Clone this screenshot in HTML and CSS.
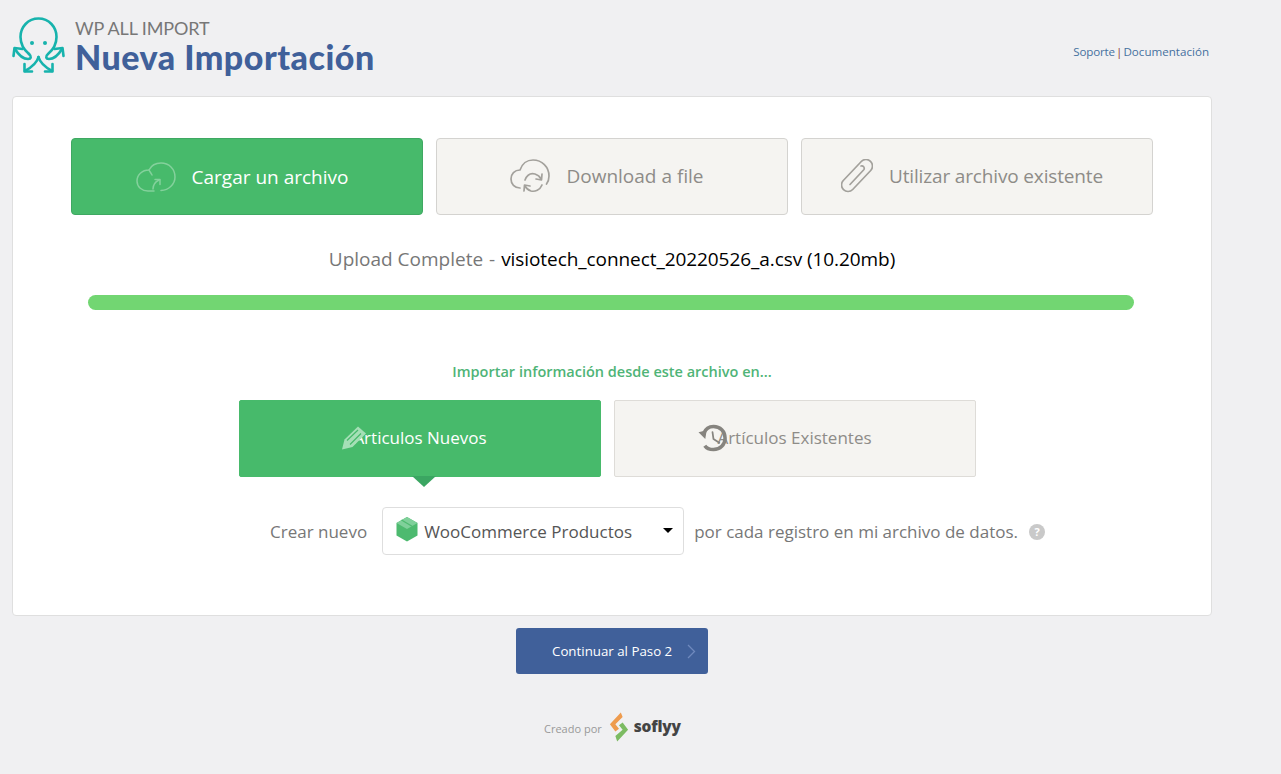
FILE: index.html
```html
<!DOCTYPE html>
<html lang="es">
<head>
<meta charset="utf-8">
<title>Nueva Importación</title>
<link rel="stylesheet" href="styles.css">
</head>
<body>
<div class="wrap">
  <header class="head">
    <svg class="logo" width="54" height="56" viewBox="0 0 54 56" fill="none" stroke="#17b3ad" stroke-width="2.6" stroke-linecap="round" stroke-linejoin="round">
      <path d="M17 37 C11 32 8.500 26 8.500 20 C8.500 10 16 1.500 26.500 1.500 C37 1.500 44.500 10 44.500 20 C44.500 26 42 32 36 37 C33 39.500 34 42 37 42 C42 42 47 37 50 32"/>
      <path d="M17 37 C20 39.500 19 42 16 42 C11 42 6 37 3 32"/>
      <path d="M1.500 39 L2.500 31 L10.500 32"/>
      <path d="M42.500 32 L50.500 31 L51.500 39"/>
      <path d="M26.500 40 C25 46 20 50 13 54"/>
      <path d="M26.500 40 C28 46 33 50 40 54"/>
      <path d="M12.500 47 L12.500 54.500 L20 54.500"/>
      <path d="M40.500 47 L40.500 54.500 L33 54.500"/>
      <circle cx="20" cy="26" r="2" fill="#17b3ad" stroke="none"/>
      <circle cx="33" cy="26" r="2" fill="#17b3ad" stroke="none"/>
    </svg>
    <div class="titles">
      <div class="brand">WP ALL IMPORT</div>
      <h1 class="title">Nueva Importación</h1>
    </div>
    <nav class="links"><a class="link link-short">Soporte</a><span class="sep">|</span><a class="link">Documentación</a></nav>
  </header>

  <main class="card">
    <div class="tabs">
      <div class="tab tab-on">
        <svg class="tab-icon" width="40" height="30" viewBox="0 0 40 30" fill="none" stroke="#84d19c" stroke-width="1.5" stroke-linecap="round" stroke-linejoin="round">
          <path d="M25 28.500 C33 28 39 22 39 15 C39 7 33 1 25 1 C19 1 15 4 13 8 C6 8 1 13 1 19 C1 25 6 29 12 29 L18 29"/>
          <path d="M13 8 C14 10 15 11 16 13"/>
          <path d="M17 27 C17 23 19 20 23 18"/>
          <path d="M19 17.500 L24 17.500 L24 22.500"/>
        </svg>
        <span>Cargar un archivo</span>
      </div>
      <div class="tab tab-off">
        <svg class="tab-icon" width="40" height="34" viewBox="0 0 40 34" fill="none" stroke="#a3a19c" stroke-width="1.7" stroke-linecap="round" stroke-linejoin="round">
          <path d="M10 29 C4.500 29 1 25 1 20 C1 15 4.500 11 10 11 C12 5 17 1 23 1 C32 1 39 8 39 17 C39 20 38 23 36.500 25"/>
          <path d="M15 21 C17 16 21 14 25 15 C28 16 30 18 31 20"/>
          <path d="M32 15 L31.500 21 L26 20"/>
          <path d="M32 26 C30 31 25 33 21 32 C18 31 16 29 15 27"/>
          <path d="M14 32 L14.500 26 L20 27"/>
        </svg>
        <span>Download a file</span>
      </div>
      <div class="tab tab-off">
        <svg class="tab-icon" width="32" height="34" viewBox="0 0 32 34" fill="none" stroke="#a3a19c" stroke-width="1.7" stroke-linecap="round" stroke-linejoin="round">
          <path d="M20.300 2.500 L2.300 21.500 A6.500 6.500 0 0 0 11.700 30.500 L29.700 11.500 A6.500 6.500 0 0 0 20.300 2.500 Z"/>
          <path d="M9 25.500 L23 10.500 A2.500 2.500 0 0 0 20 7"/>
        </svg>
        <span class="tight">Utilizar archivo existente</span>
      </div>
    </div>

    <p class="status"><span class="status-label">Upload Complete</span> <span class="status-dash">-</span> <span class="status-file">visiotech_connect_20220526_a.csv (10.20mb)</span></p>
    <div class="progress"></div>

    <h2 class="sub">Importar información desde este archivo en...</h2>
    <div class="choices">
      <div class="choice choice-on">
        <svg class="choice-icon" width="24" height="24" viewBox="1 2 24 23">
          <path d="M1 25 L3.500 15 L17 2 L25 9 L11.500 22.500 Z" fill="#a5dfb6"/>
          <path d="M6 16 L17 5.500 M9 20 L20 9" stroke="#47ba6b" stroke-width="1.200" fill="none"/>
        </svg>
        <span>Articulos Nuevos</span>
      </div>
      <div class="choice choice-off">
        <svg class="choice-icon" width="29" height="28" viewBox="0 0 30 28" fill="none" stroke="#86847f" stroke-width="3.600">
          <path d="M6 9 C8 4 12 2 16 2 C23 2 28 7 28 14 C28 21 23 26 16 26 C12 26 9 25 7 22"/>
          <path d="M0.500 8 L9 6 L7.500 15 Z" fill="#86847f" stroke="none"/>
          <path d="M15 8 L16 15 L22 19" stroke-width="1.800" stroke-linecap="round"/>
        </svg>
        <span>Artículos Existentes</span>
      </div>
    </div>

    <div class="create">
      <span>Crear nuevo</span>
      <div class="select">
        <svg class="box" width="22" height="25" viewBox="0 0 22 25">
          <path d="M11 0 L21.500 6 L21.500 18.500 L11 24.500 L0.500 18.500 L0.500 6 Z" fill="#4dba6f"/>
          <path d="M0.500 6 L11 12 L21.500 6 L11 0 Z" fill="#7fd09a"/>
          <path d="M5.500 3 L16 9.200" stroke="#4dba6f" stroke-width="1.200"/>
        </svg>
        <span class="select-text">WooCommerce Productos</span>
        <span class="caret"></span>
      </div>
      <span class="after">por cada registro en mi archivo de datos.</span>
      <span class="help">?</span>
    </div>
  </main>

  <div class="next-row">
    <div class="next">
      <span>Continuar al Paso 2</span>
      <svg width="9" height="15" viewBox="0 0 9 15" fill="none" stroke="#6f89bd" stroke-width="1.300"><path d="M1 1 L7.500 7.500 L1 14"/></svg>
    </div>
  </div>

  <footer class="foot">
    <span class="made">Creado por</span>
    <svg class="soflyy" width="20" height="32" viewBox="0 0 22 32">
      <path d="M13 0 L15 5 L7 13 L11 18 L7 21 L1 13 Z" fill="#ee9b4e"/>
      <path d="M9 32 L7 26 L15 19 L11 14 L15 11 L21 19 Z" fill="#7cbb62"/>
    </svg>
    <span class="soflyy-name">soflyy</span>
  </footer>
</div>
</body>
</html>
```
FILE: styles.css
```css
* { box-sizing: border-box; }
html, body { margin: 0; padding: 0; }
body {
  background: #f0f0f2;
  font-family: "Open Sans", "Noto Sans", sans-serif;
  color: #777;
  height: 774px;
  overflow: hidden;
}
.wrap { width: 1200px; margin-left: 12px; }

.head { height: 96px; display: flex; align-items: flex-start; }
.logo { margin-top: 17px; flex: none; }
.titles { margin-left: 9px; padding-top: 18px; }
.brand { font-family: Lato, sans-serif; font-size: 18px; line-height: 21px; color: #777; letter-spacing: -0.13px; }
.title { margin: 0; font-family: Lato, sans-serif; font-size: 34px; line-height: 36px; font-weight: 900; color: #40609a; letter-spacing: 0.5px; }
.links { display: flex; gap: 1.2px; margin-left: auto; margin-right: 3px; margin-top: 43px; font-size: 11.6px; line-height: 17px; }
.link { color: #46709f; }
.link-short { letter-spacing: -0.2px; }
.sep { color: #8c3a3a; }

.card {
  height: 520px;
  background: #fff;
  border: 1px solid #dfdfdf;
  border-radius: 4px;
  padding: 41px 58px 0;
}
.tabs { display: flex; gap: 13px; }
.tab {
  width: 352px;
  height: 77px;
  display: flex;
  align-items: center;
  justify-content: center;
  gap: 16px;
  padding-right: 10px;
  background: #f5f4f1;
  border: 1px solid #d4d3d0;
  border-radius: 4px;
  color: #8e8c88;
  font-size: 19px;
}
.tab-on { background: #47ba6b; border-color: #3fa862; color: #fff; }
.tab-off { padding-bottom: 2px; }
.tab-icon { flex: none; }
.tight { letter-spacing: -0.15px; }

.status { margin: 29px 0 0; height: 30px; text-align: center; font-size: 19px; line-height: 30px; color: #000; }
.status-label, .status-dash { color: #777; }
.status-dash { margin: 0 1px; }
.status-file { letter-spacing: -0.07px; }
.progress { width: 1046px; height: 15px; margin: 21px 0 0 17px; background: #72d672; border-radius: 8px; }

.sub { margin: 52px 0 0; text-align: center; font-size: 14.5px; line-height: 20px; font-weight: 600; color: #4fb477; }
.choices { display: flex; gap: 13px; margin: 18px 0 0 168px; }
.choice {
  width: 362px;
  height: 77px;
  display: flex;
  align-items: center;
  justify-content: center;
  padding-bottom: 2px;
  background: #f5f4f1;
  border: 1px solid #dedcd8;
  border-radius: 2px;
  color: #8e8c88;
  font-size: 17px;
  position: relative;
}
.choice-icon { flex: none; position: relative; }
.choice-on { background: #47ba6b; border-color: #47ba6b; color: #fff; padding-right: 11px; }
.choice-on .choice-icon { margin-right: -13px; }
.choice-off { padding-right: 20px; }
.choice-off .choice-icon { margin-right: -10px; }
.choice-on::after {
  content: "";
  position: absolute;
  left: 172px;
  top: 75px;
  border-left: 12px solid transparent;
  border-right: 12px solid transparent;
  border-top: 11px solid #3ba662;
}

.create { display: flex; align-items: center; margin-top: 30px; font-size: 17px; color: #777; padding-left: 199px; }
.select {
  width: 302px;
  height: 48px;
  margin: 0 10px 0 15px;
  display: flex;
  align-items: center;
  background: #fff;
  border: 1px solid #dedede;
  border-radius: 4px;
  padding-left: 13px;
  position: relative;
  color: #555;
}
.box { margin-top: -4px; flex: none; }
.select-text { margin-left: 6px; }
.caret {
  position: absolute;
  right: 10px;
  top: 20px;
  border-left: 5px solid transparent;
  border-right: 5px solid transparent;
  border-top: 5px solid #000;
}
.after { white-space: nowrap; }
.help {
  width: 16px;
  height: 16px;
  margin: 1px 0 0 11px;
  border-radius: 50%;
  background: #c9c9c9;
  color: #fff;
  font-size: 11px;
  font-weight: 700;
  line-height: 16px;
  text-align: center;
  flex: none;
}

.next-row { display: flex; justify-content: center; margin-top: 12px; }
.next {
  width: 192px;
  height: 46px;
  display: flex;
  align-items: center;
  gap: 15px;
  padding-left: 36px;
  background: #40609a;
  border-radius: 3px;
  color: #fff;
  font-size: 13.3px;
}

.foot { display: flex; align-items: center; margin: 37px 0 0 532px; }
.made { font-size: 11px; color: #999; margin-right: 7px; margin-top: 2px; }
.soflyy { flex: none; margin-right: 5px; }
.soflyy-name { font-size: 15.5px; font-weight: 800; color: #444; margin-top: -3px; letter-spacing: -0.2px; }
```
